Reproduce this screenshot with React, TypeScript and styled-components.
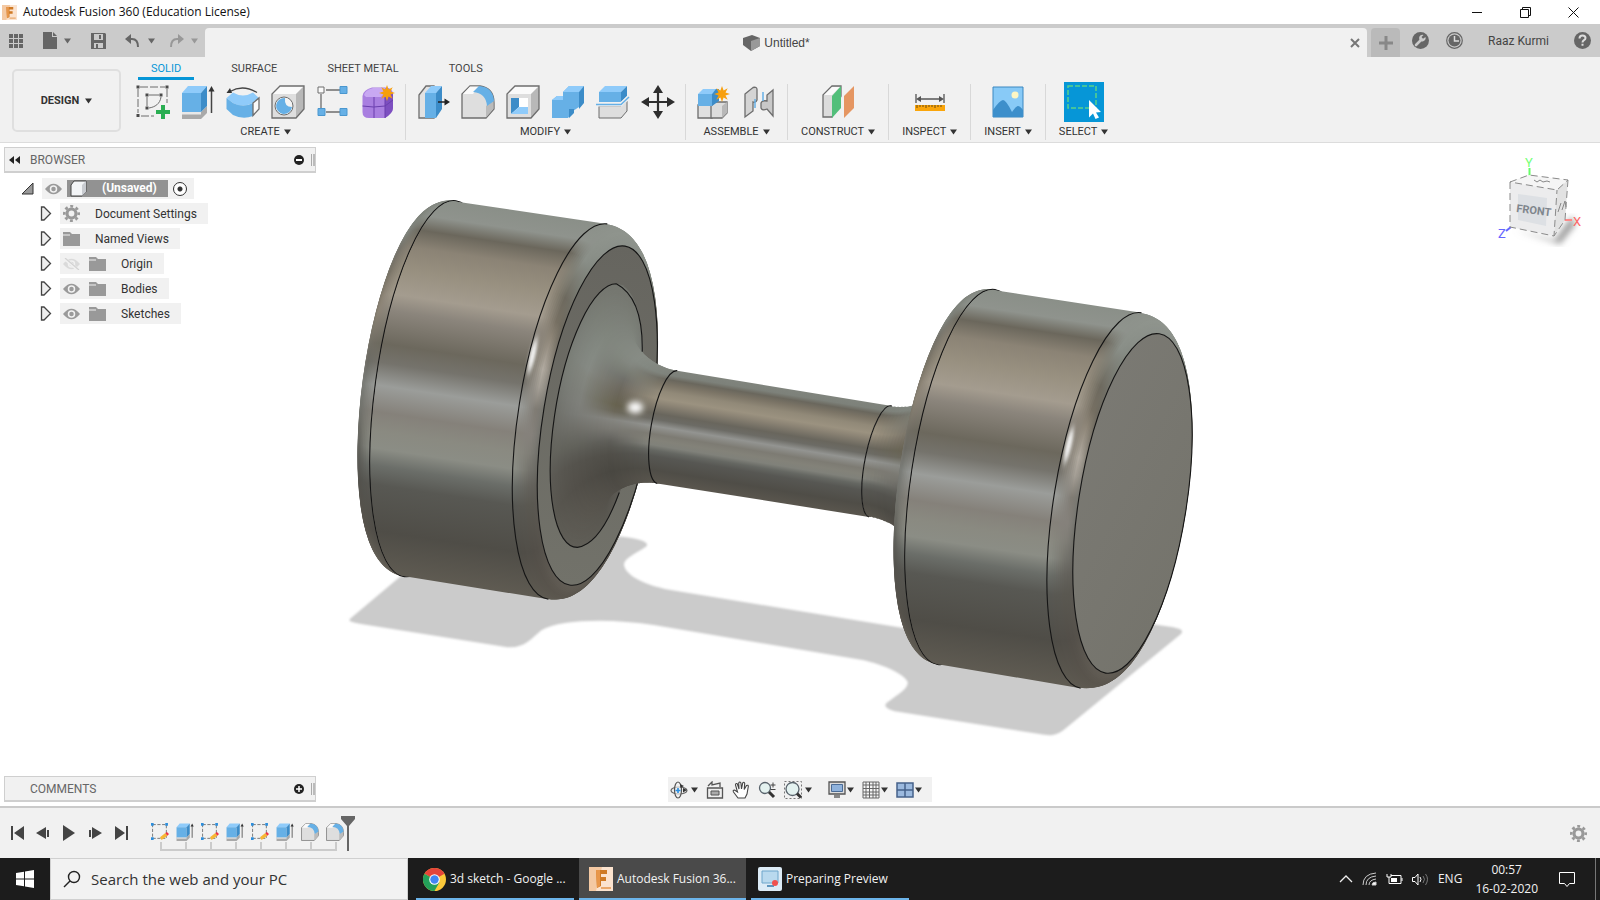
import React from 'react';
import styled, { createGlobalStyle, css } from 'styled-components';

const UI = 'Roboto, "Liberation Sans", Arial, sans-serif';
const SYS = '"Open Sans", "Noto Sans", sans-serif';

const GlobalStyle = createGlobalStyle`
  * { box-sizing: border-box; }
  body { margin: 0; background: #fff; font-family: ${UI}; color: #444; }
  button { font: inherit; color: inherit; background: none; border: 0; padding: 0; cursor: pointer; }
  svg { display: block; flex: none; }
  ul { list-style: none; margin: 0; padding: 0; }
`;

/* ---------- shell ---------- */

const Shell = styled.div`
  min-height: 100vh;
  display: flex;
  flex-direction: column;
`;

const TitleBar = styled.header`
  height: 24px;
  display: flex;
  align-items: center;
  padding: 0 3px 0 2px;
  gap: 6px;
  background: #fff;
`;

const WindowTitle = styled.h1`
  margin: 0;
  flex: 1;
  font: 400 12px/24px ${SYS};
  color: #111;
`;

const WindowControls = styled.div`
  display: flex;
`;

const WindowButton = styled.button`
  width: 48px;
  height: 24px;
  display: grid;
  place-items: center;
`;

const TabStrip = styled.div`
  height: 33px;
  display: flex;
  background: #cbcbcb;
  color: #666;
`;

const QuickAccess = styled.div`
  width: 205px;
  height: 33px;
  display: flex;
  align-items: center;
  padding-left: 8px;
`;

const QuickButton = styled.button<{ $w: number; $dim?: boolean }>`
  width: ${p => p.$w}px;
  height: 24px;
  display: flex;
  align-items: center;
  gap: 7px;
  opacity: ${p => (p.$dim ? 0.5 : 1)};
`;

const DocTab = styled.div`
  flex: 1;
  margin-top: 4px;
  padding: 0 5px 0 0;
  display: flex;
  align-items: center;
  background: #f1f1f1;
  border-radius: 4px 4px 0 0;
`;

const DocName = styled.div`
  flex: 1;
  display: flex;
  justify-content: center;
  align-items: center;
  gap: 4px;
  font: 400 12px/16px "Liberation Sans", Arial, sans-serif;
  color: #444;
`;

const CloseTab = styled.button`
  width: 14px;
  height: 14px;
  display: grid;
  place-items: center;
`;

const NewTab = styled.button`
  width: 29px;
  margin: 4px 12px 0 4px;
  display: grid;
  place-items: center;
  background: #bababa;
  border-radius: 4px 4px 0 0;
`;

const Account = styled.div`
  display: flex;
  align-items: center;
  gap: 17px;
  padding-right: 9px;
`;

const UserButton = styled.button`
  font-size: 12px;
  line-height: 16px;
  color: #444;
  margin: 0 8px 0 8px;
`;

/* ---------- ribbon ---------- */

const Ribbon = styled.div`
  height: 86px;
  display: flex;
  background: #f1f1f1;
  border-bottom: 1px solid #dcdcdc;
`;

const Workspace = styled.button`
  width: 109px;
  height: 63px;
  margin: 12px 5px 0 12px;
  display: flex;
  align-items: center;
  justify-content: center;
  gap: 6px;
  border: 2px solid #dfdfdf;
  border-radius: 5px;
  font-size: 11px;
  font-weight: 700;
  color: #333;
`;

const RibbonBody = styled.div`
  flex: 1;
`;

const RibbonTabs = styled.nav`
  display: flex;
  gap: 24px;
  padding-left: 12px;
`;

const RibbonTab = styled.button<{ $active?: boolean }>`
  height: 23px;
  padding: 4px 13px 0;
  font-size: 11px;
  line-height: 16px;
  white-space: nowrap;
  color: ${p => (p.$active ? '#0696d7' : '#444')};
  border-bottom: 3px solid ${p => (p.$active ? '#0696d7' : 'transparent')};
`;

const Groups = styled.div`
  display: flex;
  padding-top: 4px;
`;

const Group = styled.section<{ $pad?: number }>`
  height: 56px;
  padding: 0 ${p => p.$pad ?? 13}px;
  display: flex;
  flex-direction: column;
  align-items: center;
  gap: 4px;
  & + & { border-left: 1px solid #d8d8d8; }
`;

const Tools = styled.div`
  display: flex;
  gap: 11px;
`;

const Tool = styled.button<{ $selected?: boolean }>`
  width: 34px;
  height: 36px;
  display: grid;
  place-items: center;
  ${p => p.$selected && css`
    width: 40px;
    height: 40px;
    margin: -2px 0;
    background: #0696d7;
  `}
`;

const GroupMenu = styled.button`
  display: flex;
  align-items: center;
  gap: 4px;
  font-size: 11px;
  line-height: 16px;
  white-space: nowrap;
  color: #333;
`;

/* ---------- canvas ---------- */

const Canvas = styled.main`
  position: relative;
  flex: 1;
  min-height: 400px;
  display: flex;
  flex-direction: column;
  justify-content: space-between;
  background: #fff;
`;

const Scene = styled.svg`
  position: absolute;
  inset: 0;
  width: 100%;
  height: 100%;
`;

const TopOverlay = styled.div`
  position: relative;
  display: flex;
  justify-content: space-between;
  padding: 4px 14px 0 4px;
`;

const BottomOverlay = styled.div`
  position: relative;
  display: grid;
  grid-template-columns: 1fr auto 1fr;
  align-items: end;
  padding: 0 4px 4px;
`;

const Panel = styled.aside`
  width: 312px;
`;

const PanelBar = styled.div`
  height: 26px;
  width: 312px;
  display: flex;
  align-items: center;
  padding: 0 0 0 3px;
  background: #f1f1f1;
  border: 1px solid #cfcfcf;
  border-width: 1px 1px 2px 1px;
`;

const PanelTitle = styled.h2`
  margin: 0;
  flex: 1;
  padding-left: 10px;
  font-size: 12px;
  line-height: 16px;
  font-weight: 400;
  color: #666;
`;

const PanelButton = styled.button`
  width: 12px;
  height: 12px;
  display: grid;
  place-items: center;
`;

const Grip = styled.span`
  width: 4px;
  height: 12px;
  margin-left: 6px;
  border-left: 1px solid #aaa;
  border-right: 2px solid #bbb;
`;

const Tree = styled.ul`
  padding-top: 3px;
`;

const TreeRow = styled.li<{ $root?: boolean }>`
  height: 25px;
  display: flex;
  align-items: center;
  gap: 8px;
  padding-left: ${p => (p.$root ? 17 : 36)}px;
`;

const Chip = styled.div<{ $root?: boolean }>`
  height: 21px;
  display: flex;
  align-items: center;
  gap: ${p => (p.$root ? 5 : 9)}px;
  padding: 0 ${p => (p.$root ? 7 : 11)}px 0 3px;
  background: #f1f1f1;
  font-size: 12px;
  color: #333;
`;

const TreeLabel = styled.span`
  padding-left: 6px;
`;

const RootName = styled.span`
  height: 17px;
  display: flex;
  align-items: center;
  gap: 14px;
  padding: 0 11px 0 3px;
  background: #929292;
  color: #fff;
  font-weight: 700;
  line-height: 17px;
`;

const Activate = styled.input`
  appearance: none;
  width: 14px;
  height: 14px;
  margin: 0;
  border: 1px solid #333;
  border-radius: 50%;
  background: radial-gradient(circle, #333 0 2px, #fff 3px);
`;

const NavBar = styled.div`
  height: 25px;
  display: flex;
  align-items: center;
  gap: 8px;
  padding: 0 10px 0 2px;
  background: #f1f1f1;
`;

const NavButton = styled.button<{ $tight?: boolean }>`
  display: flex;
  align-items: center;
  gap: ${p => (p.$tight ? 1 : 3)}px;
`;

/* ---------- timeline ---------- */

const Timeline = styled.div`
  height: 52px;
  display: flex;
  align-items: flex-start;
  padding: 0 13px 0 4px;
  background: #f1f1f1;
  border-top: 2px solid #cacaca;
`;

const Playback = styled.div`
  display: flex;
  padding-top: 12px;
`;

const PlayButton = styled.button`
  width: 26px;
  height: 26px;
  display: grid;
  place-items: center;
`;

const History = styled.ul`
  display: flex;
  padding: 15px 0 0 14px;
`;

const Feature = styled.li`
  width: 25px;
  &:not(:last-child) button::after { border-bottom: 2px solid #cbcbcb; }
`;

const FeatureButton = styled.button`
  width: 25px;
  display: block;
  svg { margin-left: 3px; }
  &::after {
    content: '';
    display: block;
    width: 25px;
    height: 7px;
    margin: 1px 0 0 12px;
    border-left: 2px solid #cbcbcb;
  }
`;

const Marker = styled.div`
  padding-top: 8px;
  margin-left: -7px;
`;

const TimelineSettings = styled.button`
  margin: 17px 0 0 auto;
`;

/* ---------- taskbar ---------- */

const TaskBar = styled.footer`
  height: 42px;
  display: flex;
  background: #1c1c1c;
  color: #f2f2f2;
  font: 400 12px/16px ${SYS};
`;

const Start = styled.button`
  width: 50px;
  display: grid;
  place-items: center;
`;

const SearchBox = styled.label`
  width: 358px;
  display: flex;
  align-items: center;
  gap: 10px;
  padding-left: 12px;
  background: #f2f2f2;
  border: 1px solid #d0d0d0;
  margin-right: 8px;
`;

const SearchInput = styled.input`
  flex: 1;
  min-width: 0;
  padding: 0;
  border: 0;
  outline: 0;
  background: none;
  font: 400 15px/20px ${SYS};
  color: #333;
  &::placeholder { color: #333; opacity: 1; }
`;

const Task = styled.button<{ $active?: boolean }>`
  width: ${p => (p.$active ? 167 : 158)}px;
  margin-right: 5px;
  padding: 2px 0 0 ${p => (p.$active ? 10 : 7)}px;
  display: flex;
  align-items: center;
  gap: 4px;
  white-space: nowrap;
  border-bottom: 2px solid #6cb4ea;
  background: ${p => (p.$active ? '#4a4a4a' : 'none')};
`;

const Tray = styled.div`
  margin-left: auto;
  display: flex;
  align-items: center;
  gap: 9px;
`;

const TrayButton = styled.button`
  display: block;
`;

const Clock = styled.button`
  text-align: center;
  line-height: 19px;
  margin: 0 11px 0 4px;
`;

const ShowDesktop = styled.button`
  width: 5px;
  height: 42px;
  margin-left: 10px;
  border-left: 1px solid #777;
`;

/* ---------- icons ---------- */

const Caret = ({ c = '#333' }: { c?: string }) => (
  <svg width="7" height="6" viewBox="0 0 7 6"><path d="M0 0.5h7L3.5 5.5z" fill={c} /></svg>
);

const Ico = ({ s = 34, children }: { s?: number; children: React.ReactNode }) => (
  <svg width={s} height={s} viewBox="0 0 34 34" fill="none">{children}</svg>
);

const B1 = '#8fcbfa', B2 = '#66b0e6', B3 = '#3c8cc8', LN = '#6d6d6d';

const SketchIcon = () => (
  <Ico>
    <path d="M2 4v24M4 2h25M31 4v14M5 31h13" stroke={LN} strokeDasharray="8 2" />
    <path d="M11 12v9M13 10h10M25 12C24 19 19 22 13 23" stroke={LN} />
    <path d="M.5.5h3v3h-3zM29.500.5h3v3h-3zM.5 29h3v3h-3zM9.500 8.500h3v3h-3zM23.500 8.500h3v3h-3zM9.500 21.500h3v3h-3z" fill="#4a4a4a" />
    <path d="M25 20h4v5h5v4h-5v5h-4v-5h-5v-4h5z" fill="#2aae52" />
  </Ico>
);
const ExtrudeIcon = ({ s }: { s?: number }) => (
  <Ico s={s}>
    <path d="M1 27h19l6-6v7l-6 6H1z" fill="#a9a9a9" />
    <path d="M1 27h19v2.500H1z" fill="#e8e8e8" />
    <path d="M1 8 7 1h19l-6 7z" fill={B1} /><path d="M1 8h19v19H1z" fill={B2} /><path d="m20 8 6-7v20l-6 6z" fill={B3} />
    <path d="M30.500 5v23" stroke="#444" strokeWidth="1.500" /><path d="M30.500 1 33.500 6.500h-6z" fill="#333" />
  </Ico>
);
const RevolveIcon = () => (
  <Ico>
    <path d="M4 6.500Q17-1 31 7.500" stroke="#444" strokeWidth="1.300" /><path d="m.5 8 3.500-5 2 5z" fill="#333" />
    <path d="M.5 13 7 7.500q10 6 20 0L33 13l-6 5q-11 5-20 0z" fill={B1} />
    <path d="M.5 13 7 18q10 5 20 0v13q-10 4-20-1L.5 24z" fill={B2} />
    <path d="m27 18 6-5v11l-6 6.500z" fill="#fafafa" stroke={LN} strokeWidth="1.300" />
  </Ico>
);
const HoleIcon = () => (
  <Ico>
    <path d="m1 9 7-8h25l-8 8z" fill="#fafafa" /><path d="M1 9h24v24H1z" fill="#dedede" /><path d="m25 9 8-8v23l-8 9z" fill="#b8b8b8" />
    <path d="M1 33V9l8-8h24v23l-8 9z" stroke={LN} strokeWidth="1.300" />
    <circle cx="13" cy="21" r="9" fill="#f4f4f4" stroke={LN} /><path d="M14 13a8 8 0 1 0 7 9q-8 0-7-9z" fill={B2} />
  </Ico>
);
const PatternIcon = () => (
  <Ico>
    <path d="M10 5h14M5 9v16M10 27h14" stroke={LN} strokeWidth="1.300" />
    <path d="M2 2h6v6H2z" fill="#fafafa" stroke={LN} />
    <path d="M24 1.500h7v7h-7zM24 23.500h7v7h-7zM2 23.500h7v7H2z" fill={B2} stroke="#4a97cf" />
  </Ico>
);
const Star = ({ x, y }: { x: number; y: number }) => (
  <path transform={`translate(${x} ${y})`} d="M0-8 1.600-3.500 5.700-5.700 3.500-1.600 8 0 3.500 1.600 5.700 5.700 1.600 3.500 0 8-1.600 3.500-5.700 5.700-3.500 1.600-8 0-3.500-1.600-5.700-5.700-1.600-3.500z" fill="#f79f0c" />
);
const FormIcon = () => (
  <Ico>
    <path d="M1.500 11Q2 5 11 2.500h13q7 0 8 6v14q0 5-8 10.500H8q-6.500 0-6.500-6z" fill="#a97fe0" />
    <path d="M3 10Q4 5 12 3h12q0 6-4 9H5z" fill="#c8a8f2" /><path d="M24 12l8-4v15q0 5-8 10z" fill="#7d4fc0" />
    <path d="M13 12v21M1.500 21q11 2 22.500 0l8-6M24 12v21" stroke="#6a3fae" />
    <Star x={26} y={8} />
  </Ico>
);
const PressPullIcon = () => (
  <Ico>
    <path d="M3 10 10 1h8v32H3z" fill="#e2e2e2" stroke={LN} strokeWidth="1.300" />
    <path d="m9 8 6-7h11l-6 7z" fill={B1} /><path d="M9 8h11v25H9z" fill={B2} /><path d="m20 8 6-7v23l-6 9z" fill={B3} />
    <path d="M22 17h7" stroke="#222" strokeWidth="1.500" /><path d="m28.500 13.500 5.500 3.500-5.500 3.500z" fill="#222" />
  </Ico>
);
const FilletIcon = ({ s }: { s?: number }) => (
  <Ico s={s}>
    <path d="M1 33V9l8-8h10q14 2 14 17v6l-8 9z" fill="#dedede" stroke={LN} strokeWidth="1.300" />
    <path d="M2 9 9 1.600h9L12 9z" fill="#fafafa" /><path d="m25 21 7.400-6v9L25 32.400z" fill="#bbb" />
    <path d="M12 7 18 1q14 1 15 15l-7 5Q25 8 12 7z" fill={B2} />
  </Ico>
);
const ShellIcon = () => (
  <Ico>
    <path d="m1 9 8-8h24l-8 8z" fill="#fafafa" /><path d="M1 9h24v24H1z" fill="#dedede" /><path d="m25 9 8-8v23l-8 9z" fill="#b8b8b8" />
    <path d="M1 33V9l8-8h24v23l-8 9z" stroke={LN} strokeWidth="1.300" />
    <path d="M5 13h17v16H5z" fill="#fff" /><path d="M5 13h8v9l-8 7z" fill={B3} /><path d="M5 29l8-7h9v7z" fill={B1} />
  </Ico>
);
const CombineIcon = () => (
  <Ico>
    <path d="M1 15l5-4h6V7l6-6h15l-5 6v15l-6 4v1l-5 6H1z" fill={B2} />
    <path d="m12 7 6-6h15l-5 6zM1 15l5-4h6v4z" fill={B1} /><path d="m28 7 5-6v17l-5 6zM18 24h5v4l-5 5z" fill={B3} />
  </Ico>
);
const SplitIcon = () => (
  <Ico>
    <path d="M3 21h22l6-5v10l-6 7H3z" fill="#dedede" stroke={LN} />
    <path d="m3 7 6-6h22l-6 6z" fill={B1} /><path d="M3 7h22v10H3z" fill={B2} /><path d="m25 7 6-6v10l-6 6z" fill={B3} />
    <path d="M0 19.500h25L33 12" stroke="#f1f1f1" strokeWidth="4" /><path d="M0 19.500h25L33 12" stroke={B2} strokeWidth="1.500" />
  </Ico>
);
const MoveIcon = () => (
  <Ico>
    <path d="M17 4v26M4 17h26" stroke="#2e2e2e" strokeWidth="2.200" />
    <path d="m17 0 5 8H12zM17 34l5-8H12zM0 17l8-5v10zM34 17l-8-5v10z" fill="#2e2e2e" />
  </Ico>
);
const ComponentIcon = () => (
  <Ico>
    <path d="M1 20h14v13H1z" fill="#e0e0e0" stroke={LN} strokeWidth="1.300" />
    <path d="m14 21 4-4h12v11l-5 5H14z" fill="#dcdcdc" stroke={LN} strokeWidth="1.300" /><path d="m25 21 5-4v11l-5 5z" fill="#b8b8b8" />
    <path d="m1 9 5-5h15l-6 5z" fill={B1} /><path d="M1 9h14v12H1z" fill={B2} /><path d="m15 9 4-5h3v12l-7 5z" fill={B3} />
    <Star x={25} y={9} />
  </Ico>
);
const JointIcon = () => (
  <Ico>
    <path d="M3 9 11 2.500q4-1 4 2V15q-1 3-4 2v9l-8 6z" fill="#d4d4d4" stroke={LN} strokeWidth="1.300" />
    <path d="m31 5-6 5v6q-5-1-6 2v5q1 3 6 1l6 7z" fill="#c8c8c8" stroke={LN} strokeWidth="1.300" />
    <path d="M13 14v9M21 7v9" stroke={B2} strokeWidth="1.500" />
  </Ico>
);
const PlaneIcon = () => (
  <Ico>
    <path d="M2 10 11 1h9v10l-9 21H2z" fill="#dcdcdc" stroke={LN} strokeWidth="1.300" /><path d="M3 10 11 2h8l-8 8z" fill="#fafafa" />
    <path d="m11 11 9-10v22l-9 10z" fill="#52bf7a" /><path d="m23 11 10-10v22L23 33z" fill="#e59662" />
  </Ico>
);
const MeasureIcon = () => (
  <Ico>
    <path d="M3 9v9M31 9v9M5 14h24" stroke="#555" strokeWidth="1.300" /><path d="m3 14 5-3v6zM31 14l-5-3v6z" fill="#555" />
    <path d="M2 20h30v6H2z" fill="#faa50a" /><path d="M4 20v3M7 20v2M10 20v2M13 20v3M16 20v2M19 20v2M22 20v3M25 20v2M28 20v2" stroke="#6b4a10" />
  </Ico>
);
const ImageIcon = () => (
  <Ico>
    <path d="M2 2h30v30H2z" fill="#88caf7" stroke="#3b87c0" /><circle cx="24" cy="10" r="3.500" fill="#fcf6c4" />
    <path d="M2 25q7-10 10-10t9 12q4-6 6-6t5 4v7H2z" fill="#3d8fcb" />
  </Ico>
);
const SelectIcon = () => (
  <svg width="40" height="40" viewBox="0 0 40 40" fill="none">
    <path d="M4 4h28v22H4z" stroke="#59d28b" strokeDasharray="5 2" strokeWidth="1.500" />
    <path d="m25 18 12 12-5 .5 3 5-3.500 1.500-2.500-5.500-4 4z" fill="#fff" />
  </svg>
);
const TinySketch = () => (
  <Ico s={18}>
    <path d="M3 3h26v26H3z" stroke="#777" strokeWidth="1.800" strokeDasharray="6 3" />
    <path d="M0 0h5v5H0zM27 0h5v5h-5zM0 27h5v5H0z" fill="#2d8fdd" /><path d="m17 27 10-8 4 5-11 8z" fill="#f7b733" /><path d="m27 19 3-2 4 4-3 3z" fill="#e34" />
  </Ico>
);
const Eye = ({ off }: { off?: boolean }) => (
  <svg width="17" height="12" viewBox="0 0 17 12" fill="none" opacity={off ? 0.25 : 1}>
    <path d="M0 6Q8.500-4.500 17 6 8.500 16.500 0 6z" fill="#9a9a9a" /><circle cx="8.500" cy="6" r="3" fill="#9a9a9a" stroke="#f1f1f1" strokeWidth="1.500" />
    {off && <path d="M1 0 15 12" stroke="#f1f1f1" strokeWidth="3" />}
    {off && <path d="M2 0 16 12" stroke="#777" strokeWidth="1.200" />}
  </svg>
);
const Folder = () => (
  <svg width="17" height="14" viewBox="0 0 17 14"><path d="M0 0h7l2 2h8v12H0z" fill="#999" /><path d="M0 3h7" stroke="#f1f1f1" /></svg>
);
const Gear = () => (
  <svg width="17" height="17" viewBox="0 0 17 17" fill="none" stroke="#999">
    <circle cx="8.500" cy="8.500" r="4.500" strokeWidth="3.200" /><circle cx="8.500" cy="8.500" r="7.200" strokeWidth="2.600" strokeDasharray="2.900 2.754" strokeDashoffset="1.450" />
  </svg>
);
const Arrow = () => (
  <svg width="12" height="15" viewBox="0 0 12 15"><path d="M1.500 1 4 1 10.500 7.500 4 14H1.500z" fill="#eee" stroke="#444" strokeWidth="1.300" /></svg>
);
const FusionLogo = ({ s }: { s: number }) => (
  <svg width={s} height={s} viewBox="0 0 24 24">
    <path d="M0 0h24v24H0z" fill="#fbe3cf" /><path d="M0 0h13L7 24H0z" fill="#f4c9a3" />
    <path d="M7 3h11v4h-6v3h5v4h-5v5l-4 2z" fill="#cf7a25" /><path d="M7 3h4v16l-3 2z" fill="#e8964a" /><path d="M12 20h10v2H12z" fill="#e9a86c" />
  </svg>
);
const Magnifier = () => (
  <>
    <circle cx="7" cy="7" r="5.500" fill="#e4f2f0" stroke="#59636c" strokeWidth="1.300" /><path d="m11 11 5 5" stroke="#333" strokeWidth="3" />
  </>
);

/* ---------- dumbbell ---------- */

type Ring = { cx: number; cy: number; rx: number; ry: number; rot: number };

const OFFSETS = [0, 0.05, 0.09, 0.137, 0.2, 0.267, 0.311, 0.4, 0.45, 0.51, 0.58, 0.63, 0.675, 0.72, 0.77, 0.89, 1];
const BAND = '8a8f88 8f938d 6b675c 8b8375 989080 a49c8f 8b857c 6c685d 75736c 9b9d9a 85817a 8a8a81 8b8d85 6b6e69 585853 4f4d47 5f5b52'.split(' ');
const SHAFT = '80847d 7d817a 6a675d 7b7466 918978 9b9280 8c8475 69665d 6c6b65 939491 7d7b73 838279 80817a 656762 575753 4f4d47 5a564e'.split(' ');
const ROUND = '8f948d 8d928b 8a8f88 7d7e75 6d695e 777063 8d8577 b1aaa0 a49e95 807c74 85817b 7f7d76 74736c 64625c 5a5851 524e48 5a554d'.split(' ');
const EDGE = '8b908a 888d86 82877f 7b7f77 73736a 69665c 6b675d 7b776d 7f7d76 74756f 6f706a 6b6b65 676660 605e58 5b5852 57534c 635e56'.split(' ');
const BACK = '7c817a 7d827a 7f827b 76736a 7a7467 8a8274 8c8476 716e64 6b6a63 7c7e79 73736d 6c6c65 666660 5b5b56 53524d 56524b 6a655c'.split(' ');
const HUB_OUT = '73756e 757770 767972 777a73 787b75 797d76 797d76 757872 72746e 6e6f69 6a6a64 66665f 63635c 5f5e58 5c5a54 5a5851 605e57'.split(' ');
const HUB_LIT = '7d817a 7f847c 81867e 838881 858a83 868a84 83867f 7f817b 7f807b 7b7c77 70706a 686862 62625b 5b5a54 55534d 524f49 58554e'.split(' ');
const HUB_DARK = '878c85 868b84 838780 7b7e76 70706a 6d695f 6b665a 67624f 6b6759 858580 7a7973 6c6b66 5e5d58 56554f 504e48 494741 4f4c46'.split(' ');

const mixHex = (a: string, b: string, t: number) => {
  const ch = (s: string, i: number) => parseInt(s.slice(i, i + 2), 16);
  return [0, 2, 4].map(i => Math.round(ch(a, i) + (ch(b, i) - ch(a, i)) * t).toString(16).padStart(2, '0')).join('');
};
const mixStops = (keys: string[][], t: number) => {
  const p = t * (keys.length - 1);
  const i = Math.min(Math.floor(p), keys.length - 2);
  return keys[i].map((c, n) => mixHex(c, keys[i + 1][n], p - i));
};
const mix = (a: number, b: number, t: number) => a + (b - a) * t;

const Stops = ({ colors }: { colors: string[] }) => (
  <>{colors.map((c, i) => <stop key={i} offset={OFFSETS[i]} stopColor={`#${c}`} />)}</>
);

/* Sweeps a circle along the axis; `axial` and `radial` ease position and radius. */
const Sweep = ({ id, from, to, keys, steps, axial, radial, end = 1 }: {
  id: string; from: Ring; to: Ring; keys: string[][]; steps: number; end?: number;
  axial: (t: number) => number; radial: (t: number) => number;
}) => (
  <>
    {Array.from({ length: steps + 1 }, (_, i) => {
      const t = (i / steps) * end;
      const a = axial(t), r = radial(t);
      const cx = mix(from.cx, to.cx, a), cy = mix(from.cy, to.cy, a);
      return (
        <g key={i}>
          <linearGradient id={`${id}${i}`} x1="0" y1="0" x2="0" y2="1"><Stops colors={mixStops(keys, t)} /></linearGradient>
          <ellipse cx={cx} cy={cy} rx={mix(from.rx, to.rx, r)} ry={mix(from.ry, to.ry, r)}
            transform={`rotate(${mix(from.rot, to.rot, a)} ${cx} ${cy})`} fill={`url(#${id}${i})`} />
        </g>
      );
    })}
  </>
);

const rise = (t: number) => Math.sin((t * Math.PI) / 2);
const fall = (t: number) => 1 - Math.cos((t * Math.PI) / 2);

const Outline = ({ r }: { r: Ring }) => (
  <ellipse cx={r.cx} cy={r.cy} rx={r.rx} ry={r.ry} transform={`rotate(${r.rot} ${r.cx} ${r.cy})`} fill="none" stroke="#151515" strokeWidth="1.100" />
);

const L = {
  back: { cx: 411, cy: 386, rx: 48, ry: 172, rot: 7.7 },
  b1: { cx: 429.5, cy: 389, rx: 55, ry: 190, rot: 7.8 },
  b2: { cx: 577.5, cy: 412, rx: 59, ry: 190, rot: 9 },
  face: { cx: 597, cy: 416, rx: 53.9, ry: 172, rot: 9.3 },
};
const R = {
  back: { cx: 949, cy: 474, rx: 48, ry: 172, rot: 8.5 },
  b1: { cx: 966.5, cy: 477.5, rx: 55, ry: 190, rot: 8.7 },
  b2: { cx: 1111.5, cy: 501, rx: 57, ry: 190, rot: 9.2 },
  face: { cx: 1133, cy: 504, rx: 53.9, ry: 172, rot: 9 },
};
const HUB: Ring = { cx: 596.5, cy: 416, rx: 41.8, ry: 133.5, rot: 9.3 };
const NECK: Ring = { cx: 667, cy: 427.5, rx: 16.5, ry: 57.4, rot: 10 };
const NECK2: Ring = { cx: 880.5, cy: 462, rx: 15.5, ry: 56.6, rot: 11 };
const HUB2: Ring = { cx: 950, cy: 473, rx: 40, ry: 130, rot: 9.3 };

const Dumbbell = () => (
  <Scene viewBox="0 143 1600 664" role="img" aria-label="Dumbbell model">
    <defs>
      <filter id="soft" x="-10%" y="-10%" width="120%" height="120%"><feGaussianBlur stdDeviation="1.300" /></filter>
      <filter id="glow" x="-100%" y="-100%" width="300%" height="300%"><feGaussianBlur stdDeviation="3" /></filter>
      <filter id="glint" x="-400%" y="-50%" width="900%" height="200%"><feGaussianBlur stdDeviation="1.600 5" /></filter>
      <linearGradient id="bandL" gradientUnits="userSpaceOnUse" x1="455" y1="201" x2="398" y2="577"><Stops colors={BAND} /></linearGradient>
      <linearGradient id="bandR" gradientUnits="userSpaceOnUse" x1="995" y1="290" x2="938" y2="666"><Stops colors={BAND} /></linearGradient>
      <linearGradient id="shaft" gradientUnits="userSpaceOnUse" x1="677" y1="371" x2="658.500" y2="484"><Stops colors={SHAFT} /></linearGradient>
      <linearGradient id="faceR" x1="0" y1="0" x2="1" y2="1"><stop offset="0" stopColor="#7b7a74" /><stop offset="1" stopColor="#74736b" /></linearGradient>
      <linearGradient id="faceL" x1="0" y1="0" x2="0" y2="1"><stop offset="0" stopColor="#66655f" /><stop offset="1" stopColor="#72726a" /></linearGradient>
    </defs>
    <path filter="url(#soft)" fill="#cbcbcb" d="M350 619 400 577 560 560 620 537C640 539 650 543 646 547C632 556 622 560 624 567C628 580 655 589 678 592L905 629 1100 617 1167 627C1182 629 1186 631 1180 636L1064 731C1056 737 1050 737 1040 735L895 712C883 709 884 705 889 702C898 695 908 690 908 683C904 674 884 666 864 661L655 626C610 619 560 620 541 631C530 640 524 649 507 648L362 625C352 623 346 622 350 619Z" />

    <Sweep id="lb" from={L.back} to={L.b1} keys={[EDGE, BACK, BAND]} steps={14} axial={fall} radial={rise} />
    <Outline r={L.b1} />
    <path fill="url(#bandL)" d="M455 201.500 607 224 600 420 548 600 404 577A54 189 7.800 0 1 455 201.500Z" />
    <Sweep id="lf" from={L.b2} to={L.face} keys={[BAND, ROUND, EDGE]} steps={16} axial={rise} radial={fall} />
    <ellipse cx="532" cy="356" rx="3" ry="18" transform="rotate(13 532 356)" fill="#fff" opacity="0.9" filter="url(#glint)" />
    <path d="M607 224A59 190 9 0 0 548 600" fill="none" stroke="#151515" strokeWidth="1.100" />
    <ellipse cx={L.face.cx} cy={L.face.cy} rx={L.face.rx} ry={L.face.ry} transform="rotate(9.300 597 416)" fill="url(#faceL)" />
    <Outline r={L.face} />
    <Sweep id="hub" from={HUB} to={NECK} keys={[HUB_OUT, HUB_LIT, HUB_DARK, SHAFT]} steps={60} axial={fall} radial={rise} />
    <path d="M616 284A41.800 133.500 9.300 0 0 577 548Q600 545 619 493M642 352Q643 298 616 284" fill="none" stroke="#151515" strokeWidth="1.100" />
    <ellipse cx="635" cy="408" rx="8" ry="6" fill="#fff" filter="url(#glow)" />

    <Sweep id="rn" from={NECK2} to={HUB2} keys={[SHAFT, HUB_DARK, HUB_DARK]} steps={20} end={0.7} axial={rise} radial={fall} />
    <path fill="url(#shaft)" d="M677 371 892 406.500A15.500 56.600 11 0 0 869 517.500L657 484A16.500 57.400 10 0 1 677 371Z" />
    <path d="M677 371A16.500 57.400 10 0 0 657 484M892 406.500A15.500 56.600 11 0 0 869 517.500" fill="none" stroke="#151515" strokeWidth="1.100" />

    <Sweep id="rb" from={R.back} to={R.b1} keys={[EDGE, BACK, BAND]} steps={14} axial={fall} radial={rise} />
    <Outline r={R.b1} />
    <path fill="url(#bandR)" d="M995 290.500 1142 313 1140 500 1081 689 938 665A54 189 8.700 0 1 995 290.500Z" />
    <Sweep id="rf" from={R.b2} to={R.face} keys={[BAND, ROUND, EDGE]} steps={16} axial={rise} radial={fall} />
    <ellipse cx="1069" cy="446" rx="3" ry="18" transform="rotate(13 1069 446)" fill="#fff" opacity="0.9" filter="url(#glint)" />
    <path d="M1142 313A57 190 9.200 0 0 1081 689" fill="none" stroke="#151515" strokeWidth="1.100" />
    <ellipse cx={R.face.cx} cy={R.face.cy} rx={R.face.rx} ry={R.face.ry} transform="rotate(9 1133 504)" fill="url(#faceR)" />
    <Outline r={R.face} />
  </Scene>
);

const ViewCube = () => (
  <svg width="92" height="101" viewBox="1494 147 92 101" fontFamily='Roboto, sans-serif' role="img" aria-label="View cube">
    <filter id="cubeShadow"><feGaussianBlur stdDeviation="3" /></filter>
    <path d="M1515 230 1555 240 1572 216 1575 225 1560 244z" fill="#999" filter="url(#cubeShadow)" />
    <path d="M1529.500 168v8" stroke="#6f6" strokeWidth="2" /><text x="1525" y="167" fontSize="13" fill="#7f7">Y</text>
    <path d="M1564 220h8" stroke="#f88" strokeWidth="2" /><text x="1573" y="226" fontSize="13" fill="#f66">X</text>
    <path d="M1511 227l-5 4" stroke="#66f" strokeWidth="2" /><text x="1498" y="238" fontSize="13" fill="#66f">Z</text>
    <path d="M1510 182 1529 175 1568 180 1557 190z" fill="#f5f5f5" /><path d="M1510 182 1557 190 1554 236 1510 227z" fill="#ececed" /><path d="M1557 190 1568 180 1565 220 1554 236z" fill="#e2e2e2" />
    <path d="M1518 194 1547 198 1546 226 1518 220z" fill="#dde0e4" />
    <path d="M1510 182 1529 175 1568 180 1557 190zM1510 182V227L1554 236 1557 190M1568 180 1565 220 1554 236" fill="none" stroke="#8a8a8a" strokeDasharray="7 4" />
    <text transform="translate(1516 212) rotate(7)" fontSize="11" fontWeight="700" fill="#7f868d">FRONT</text>
    <path d="m1534 180 3 2 3-2 3 2 4-1 3 1M1558 212l3-9M1562 210l3-9 1 6" stroke="#888" fill="none" />
  </svg>
);

/* ---------- data ---------- */

const GROUPS: { name: string; pad?: number; tools: [string, () => React.JSX.Element][] }[] = [
  { name: 'CREATE', pad: 10, tools: [['Create Sketch', SketchIcon], ['Extrude', ExtrudeIcon], ['Revolve', RevolveIcon], ['Hole', HoleIcon], ['Pattern', PatternIcon], ['Create Form', FormIcon]] },
  { name: 'MODIFY', pad: 10, tools: [['Press Pull', PressPullIcon], ['Fillet', FilletIcon], ['Shell', ShellIcon], ['Combine', CombineIcon], ['Split Body', SplitIcon], ['Move', MoveIcon]] },
  { name: 'ASSEMBLE', pad: 11, tools: [['New Component', ComponentIcon], ['Joint', JointIcon]] },
  { name: 'CONSTRUCT', tools: [['Offset Plane', PlaneIcon]] },
  { name: 'INSPECT', tools: [['Measure', MeasureIcon]] },
  { name: 'INSERT', tools: [['Canvas', ImageIcon]] },
  { name: 'SELECT', tools: [['Select', SelectIcon]] },
];

const NODES = [
  { name: 'Document Settings', icons: [<Gear key="g" />] },
  { name: 'Named Views', icons: [<Folder key="f" />] },
  { name: 'Origin', icons: [<Eye key="e" off />, <Folder key="f" />] },
  { name: 'Bodies', icons: [<Eye key="e" />, <Folder key="f" />] },
  { name: 'Sketches', icons: [<Eye key="e" />, <Folder key="f" />] },
];

const PLAY: [string, string][] = [
  ['Go to start', 'M2 1v14h2V1zM15 1v14L5 8z'],
  ['Step back', 'M11 2v12L1 8zM12 5h2v7h-2z'],
  ['Play', 'M2 0v16l12-8z'],
  ['Step forward', 'M5 2v12l10-6zM2 5h2v7H2z'],
  ['Go to end', 'M13 1v14h2V1zM2 1v14l10-7z'],
];

const FEATURES = ['sketch', 'extrude', 'sketch', 'extrude', 'sketch', 'extrude', 'fillet', 'fillet'];

const NAV: { name: string; menu?: boolean; icon: React.ReactNode }[] = [
  { name: 'Orbit', menu: true, icon: <><ellipse cx="9" cy="9.500" rx="8" ry="3.500" stroke="#666" strokeWidth="1.200" /><ellipse cx="8" cy="9" rx="3.500" ry="8" fill="#f1f1f1" fillOpacity="0.600" stroke="#555" strokeWidth="1.200" /><path d="M8 7v5M5.500 9.500h5" stroke="#2a8ee0" strokeWidth="1.600" /><path d="m10 3 4 2-3.500 2zM13 7l4 2-4 2.500z" fill="#333" /></> },
  { name: 'Look At', icon: <><path d="M1.500 7h15v10h-15z" fill="#eee" stroke="#555" strokeWidth="1.300" /><path d="M5 10h8v4H5z" fill="#aaa" stroke="#555" /><path d="M2 5 6 1v3l8-2v4" stroke="#555" strokeWidth="1.300" /></> },
  { name: 'Pan', icon: <path d="M6 17 1.500 11q-1-2 1-2l3 2L3.500 4q0-2 1.800-1.200L7 8 6.700 2q1-2 2.200 0l.6 6L10.700 2q1.400-1.500 2 .3L12.200 8.500 14.500 4.500q2-.8 1.800 1L15 13l-2 4z" fill="#fff" stroke="#444" strokeWidth="1.100" /> },
  { name: 'Zoom', icon: <><Magnifier /><path d="M12.500 4h5M15 1.500v5M12.500 8.500h5" stroke="#444" /></> },
  { name: 'Fit', menu: true, icon: <><path d="M.5.5h17v17H.5z" stroke="#777" strokeDasharray="2 2" /><circle cx="8.500" cy="8" r="6.500" fill="#e4f2f0" stroke="#59636c" strokeWidth="1.300" /><path d="m13 12.500 4 4" stroke="#333" strokeWidth="3" /></> },
];

const DISPLAY: { name: string; icon: React.ReactNode }[] = [
  { name: 'Display Settings', icon: <><path d="M1 1h16v12H1z" fill="#ddd" stroke="#555" strokeWidth="1.300" /><path d="M3.500 3.500h11v7h-11z" fill="#8fb2dc" stroke="#4a6b96" /><path d="M6 14h6v3H6z" fill="#888" /></> },
  { name: 'Grid and Snaps', icon: <path d="M1 1h16v16H1zM1 4h16M1 7.500h16M1 11h16M1 14h16M4 1v16M7.500 1v16M11 1v16M14 1v16" stroke="#666" fill="#f6f6f6" /> },
  { name: 'Viewports', icon: <path d="M1 2h8v7H1zM9 2h8v7H9zM1 9h8v7H1zM9 9h8v7H9z" fill="#9bb9de" stroke="#46618a" strokeWidth="1.500" /> },
];

const Nav18 = ({ children }: { children: React.ReactNode }) => <svg width="18" height="18" viewBox="0 0 18 18" fill="none">{children}</svg>;

export default function App() {
  return (
    <Shell>
      <GlobalStyle />
      <TitleBar>
        <FusionLogo s={15} />
        <WindowTitle>Autodesk Fusion 360 (Education License)</WindowTitle>
        <WindowControls>
          <WindowButton aria-label="Minimize"><svg width="11" height="11"><path d="M0 5.500h10" stroke="#111" /></svg></WindowButton>
          <WindowButton aria-label="Restore"><svg width="11" height="11" fill="none" stroke="#111"><path d="M.5 2.500h8v8h-8zM2.500 2V.5h8v8H9" /></svg></WindowButton>
          <WindowButton aria-label="Close"><svg width="11" height="11" stroke="#111"><path d="m.5.5 10 10M10.500.5l-10 10" /></svg></WindowButton>
        </WindowControls>
      </TitleBar>

      <TabStrip>
        <QuickAccess>
          <QuickButton $w={35} aria-label="Data Panel"><svg width="16" height="16" fill="#666"><path d="M1 1h4v4H1zM6 1h4v4H6zM11 1h4v4h-4zM1 6h4v4H1zM6 6h4v4H6zM11 6h4v4h-4zM1 11h4v4H1zM6 11h4v4H6zM11 11h4v4h-4z" /></svg></QuickButton>
          <QuickButton $w={48} aria-label="File"><svg width="14" height="17" fill="#666"><path d="M0 0h9v5h5v12H0zM10 0l4 4h-4z" /></svg><Caret c="#666" /></QuickButton>
          <QuickButton $w={34} aria-label="Save"><svg width="15" height="16" viewBox="0 0 15 16"><path d="M0 0h14l1 1v15H0z" fill="#666" /><path d="M3 1h9v6H3zM3 10h9v5H3z" fill="#cbcbcb" /><path d="M8 2h2v4H8zM5 11h2v4H5z" fill="#666" /></svg></QuickButton>
          <QuickButton $w={43} aria-label="Undo"><svg width="16" height="14" viewBox="0 0 16 14" fill="none"><path d="M3 5h4q6 0 6 8" stroke="#666" strokeWidth="2" /><path d="M0 5 6 0v10z" fill="#666" /></svg><Caret c="#666" /></QuickButton>
          <QuickButton $w={36} $dim aria-label="Redo"><svg width="16" height="14" viewBox="0 0 16 14" fill="none"><path d="M13 5H9q-6 0-6 8" stroke="#666" strokeWidth="2" /><path d="m16 5-6-5v10z" fill="#666" /></svg><Caret c="#666" /></QuickButton>
        </QuickAccess>
        <DocTab>
          <DocName>
            <svg width="17" height="16" viewBox="0 0 17 16"><path d="M0 3 9 0l8 3v8l-9 5-8-6z" fill="#666" /><path d="m8 6 9-3v8l-9 5z" fill="#999" /></svg>
            Untitled*
          </DocName>
          <CloseTab aria-label="Close tab"><svg width="10" height="10" stroke="#777" strokeWidth="2"><path d="m1 1 8 8M9 1 1 9" /></svg></CloseTab>
        </DocTab>
        <NewTab aria-label="New tab"><svg width="14" height="14" stroke="#888" strokeWidth="3"><path d="M7 0v14M0 7h14" /></svg></NewTab>
        <Account>
          <button aria-label="Extensions"><svg width="17" height="17" viewBox="0 0 17 17"><circle cx="8.500" cy="8.500" r="8.500" fill="#666" /><path d="m4 13 5-5" stroke="#cbcbcb" strokeWidth="2.600" strokeLinecap="round" /><path d="M13.500 5a3.300 3.300 0 1 1-2-2L9.500 5l1.500 1.800z" fill="#cbcbcb" /></svg></button>
          <button aria-label="Job Status"><svg width="17" height="17" viewBox="0 0 17 17"><circle cx="8.500" cy="8.500" r="7.800" fill="#cbcbcb" stroke="#666" strokeWidth="1.200" /><circle cx="8.500" cy="8.500" r="6" fill="#666" /><path d="M8.500 4v5H13" fill="none" stroke="#ddd" strokeWidth="1.500" /></svg></button>
          <UserButton>Raaz Kurmi</UserButton>
          <button aria-label="Help"><svg width="17" height="17" viewBox="0 0 17 17"><circle cx="8.500" cy="8.500" r="8.500" fill="#666" /><path d="M5.500 6.500q0-3 3-3t3 2.500q0 1.300-1.500 2.200T8.500 10.500M8.500 11.800v2" fill="none" stroke="#ddd" strokeWidth="2" /></svg></button>
        </Account>
      </TabStrip>

      <Ribbon>
        <Workspace>DESIGN <Caret /></Workspace>
        <RibbonBody>
          <RibbonTabs aria-label="Ribbon">
            {['SOLID', 'SURFACE', 'SHEET METAL', 'TOOLS'].map((t, i) => <RibbonTab key={t} $active={i === 0}>{t}</RibbonTab>)}
          </RibbonTabs>
          <Groups>
            {GROUPS.map(g => (
              <Group key={g.name} $pad={g.pad}>
                <Tools>
                  {g.tools.map(([name, Icon]) => <Tool key={name} aria-label={name} $selected={name === 'Select'}><Icon /></Tool>)}
                </Tools>
                <GroupMenu>{g.name} <Caret /></GroupMenu>
              </Group>
            ))}
          </Groups>
        </RibbonBody>
      </Ribbon>

      <Canvas>
        <Dumbbell />
        <TopOverlay>
          <Panel>
            <PanelBar>
              <PanelButton aria-label="Collapse browser"><svg width="11" height="8"><path d="M5 0v8L0 4zM11 0v8L6 4z" fill="#222" /></svg></PanelButton>
              <PanelTitle>BROWSER</PanelTitle>
              <PanelButton aria-label="Hide"><svg width="10" height="10"><circle cx="5" cy="5" r="5" fill="#222" /><path d="M2 5h6" stroke="#fff" strokeWidth="2" /></svg></PanelButton>
              <Grip />
            </PanelBar>
            <Tree>
              <TreeRow $root>
                <svg width="13" height="13"><path d="M12 1v11H1z" fill="#999" stroke="#333" /></svg>
                <Chip $root>
                  <Eye />
                  <RootName>
                    <svg width="18" height="17" viewBox="0 0 18 17"><path d="M1 5 4 1h12v11l-4 4H1z" fill="#f2f4f6" stroke="#444" /><path d="m12 5 4-4v11l-4 4z" fill="#c9ccd1" /></svg>
                    (Unsaved)
                  </RootName>
                  <Activate type="radio" name="active" defaultChecked aria-label="Activate component" />
                </Chip>
              </TreeRow>
              {NODES.map(n => (
                <TreeRow key={n.name}>
                  <Arrow />
                  <Chip>
                    {n.icons}
                    <TreeLabel>{n.name}</TreeLabel>
                  </Chip>
                </TreeRow>
              ))}
            </Tree>
          </Panel>
          <ViewCube />
        </TopOverlay>
        <BottomOverlay>
          <PanelBar>
            <PanelButton as="span" />
            <PanelTitle>COMMENTS</PanelTitle>
            <PanelButton aria-label="Add comment"><svg width="10" height="10"><circle cx="5" cy="5" r="5" fill="#222" /><path d="M2 5h6M5 2v6" stroke="#fff" strokeWidth="1.500" /></svg></PanelButton>
            <Grip />
          </PanelBar>
          <NavBar>
            {NAV.map(n => <NavButton key={n.name} aria-label={n.name}><Nav18>{n.icon}</Nav18>{n.menu && <Caret />}</NavButton>)}
            <span />
            {DISPLAY.map(n => <NavButton key={n.name} $tight aria-label={n.name}><Nav18>{n.icon}</Nav18><Caret /></NavButton>)}
          </NavBar>
        </BottomOverlay>
      </Canvas>

      <Timeline>
        <Playback>
          {PLAY.map(([name, d]) => <PlayButton key={name} aria-label={name}><svg width="16" height="16" fill="#444"><path d={d} /></svg></PlayButton>)}
        </Playback>
        <History>
          {FEATURES.map((f, i) => (
            <Feature key={i}>
              <FeatureButton aria-label={f}>
                {f === 'sketch' ? <TinySketch /> : f === 'extrude' ? <ExtrudeIcon s={18} /> : <FilletIcon s={18} />}
              </FeatureButton>
            </Feature>
          ))}
        </History>
        <Marker><svg width="14" height="35"><path d="M0 0h14v3L8 10v25H6V10L0 3z" fill="#666" /></svg></Marker>
        <TimelineSettings aria-label="Timeline settings"><Gear /></TimelineSettings>
      </Timeline>

      <TaskBar>
        <Start aria-label="Start"><svg width="18" height="18" viewBox="0 0 18 18" fill="#fff"><path d="m0 3 8-1.200v6.700H0zM9 1.600 18 0v8.500H9zM0 9.500h8v6.700L0 15zM9 9.500h9V18l-9-1.400z" /></svg></Start>
        <SearchBox>
          <svg width="18" height="18" fill="none" stroke="#222" strokeWidth="1.400"><circle cx="11" cy="7" r="5.500" /><path d="m7 11-6 6" /></svg>
          <SearchInput type="search" placeholder="Search the web and your PC" aria-label="Search the web and your PC" />
        </SearchBox>
        <Task>
          <svg width="23" height="23" viewBox="0 0 24 24">
            <circle cx="12" cy="12" r="12" fill="#fbc93a" />
            <path d="M12 12 1.600 6A12 12 0 0 1 22.400 6z" fill="#e5443a" /><path d="M1.600 6A12 12 0 0 0 12 24l5-9-5-3z" fill="#23a05a" />
            <circle cx="12" cy="12" r="5.500" fill="#fff" /><circle cx="12" cy="12" r="4.400" fill="#4285f4" />
          </svg>
          3d sketch - Google ...
        </Task>
        <Task $active><FusionLogo s={24} />Autodesk Fusion 36...</Task>
        <Task>
          <svg width="24" height="24" viewBox="0 0 24 24"><rect width="24" height="24" rx="2" fill="#dcebf6" /><path d="M4 4h16v12H4z" fill="#b9d9ee" stroke="#6fa6cb" /><path d="M9 19h7" stroke="#5c94bd" strokeWidth="2" /><circle cx="17" cy="16" r="3" fill="#f0504e" /></svg>
          Preparing Preview
        </Task>
        <Tray>
          <TrayButton aria-label="Show hidden icons"><svg width="14" height="8" fill="none" stroke="#eee" strokeWidth="1.300"><path d="m1 7 6-6 6 6" /></svg></TrayButton>
          <TrayButton aria-label="Network"><svg width="15" height="14" viewBox="0 0 15 14" fill="none" stroke="#ccc"><path d="M1 13Q1 2 14 1M4 13Q4 5 14 4M7 13Q7 8 14 7" /><path d="M10 13q0-3 4-3v3z" fill="#fff" /></svg></TrayButton>
          <TrayButton aria-label="Battery"><svg width="17" height="12" viewBox="0 0 17 12" fill="none"><path d="M5 2.500h10v8H3V7M16 5v3M1 1v3h4V1M3 4v3" stroke="#fff" /><path d="M5 5h6v4H5z" fill="#fff" /></svg></TrayButton>
          <TrayButton aria-label="Volume"><svg width="17" height="13" viewBox="0 0 17 13" fill="none" stroke="#fff"><path d="M.5 4.500H3l3-3.500v11L3 8.500H.5z" /><path d="M8 4q2 2 0 5" /><path d="M11 3q3 3 0 7M13.500 1q4 5 0 11" stroke="#777" /></svg></TrayButton>
          <TrayButton>ENG</TrayButton>
          <Clock>00:57<br />16-02-2020</Clock>
          <TrayButton aria-label="Notifications"><svg width="18" height="18" fill="none" stroke="#fff"><path d="M1.500 2.500h15v11h-5l-2.500 3-2.500-3h-5z" /></svg></TrayButton>
          <ShowDesktop aria-label="Show desktop" />
        </Tray>
      </TaskBar>
    </Shell>
  );
}
